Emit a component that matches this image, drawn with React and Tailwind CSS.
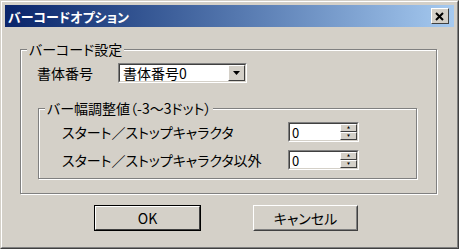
import { useState } from 'react'

const FONT = "font-['MS_UI_Gothic','Noto_Sans_CJK_JP',sans-serif] [font-feature-settings:'palt']"

function GroupBox({ label, className, children }) {
  return (
    <div className={`relative border border-[#808080] shadow-[inset_1px_1px_0_#fff,1px_1px_0_#fff] ${className}`}>
      <span className="absolute left-[6px] top-[-9px] bg-[#d4d0c8] px-[2px] leading-[16px]">{label}</span>
      {children}
    </div>
  )
}

function Sunken({ className, children }) {
  return (
    <div className={`border border-t-[#808080] border-l-[#808080] border-r-white border-b-white ${className}`}>
      <div className="h-full border border-t-[#404040] border-l-[#404040] border-r-[#d4d0c8] border-b-[#d4d0c8] bg-white flex items-center">
        {children}
      </div>
    </div>
  )
}

function SpinBox({ value }) {
  return (
    <Sunken className="w-[71px] h-[20px]">
      <span className="flex-1 pl-[2px] text-[13px] leading-none">{value}</span>
      <div className="flex flex-col h-full w-[17px]">
        {['▲', '▼'].map(a => (
          <div key={a} className="flex-1 bg-[#d4d0c8] border border-t-white border-l-white border-r-[#404040] border-b-[#404040] flex items-center justify-center text-[3px] leading-none text-black">
            {a}
          </div>
        ))}
      </div>
    </Sunken>
  )
}

export default function App() {
  const [font] = useState('書体番号0')

  return (
    <div className={`w-[459px] h-[249px] bg-[#d4d0c8] border border-t-[#d4d0c8] border-l-[#d4d0c8] border-r-[#404040] border-b-[#404040] text-black ${FONT}`}>
      <div className="h-full border border-t-white border-l-white border-r-[#808080] border-b-[#808080] p-[3px] flex flex-col">
        {/* title bar */}
        <div className="h-[22px] bg-linear-to-r from-[#0a246a] to-[#a6caf0] flex items-center justify-between pl-[3px] pr-[5px]">
          <span className="text-white font-bold text-[13px] leading-none">バーコードオプション</span>
          <button className="w-[18px] h-[16px] bg-[#d4d0c8] border border-t-white border-l-white border-r-[#404040] border-b-[#404040] flex items-center justify-center">
            <svg width="10" height="9" viewBox="0 0 10 9">
              <path d="M1 1 L8 8 M8 1 L1 8" stroke="#000" strokeWidth="2" />
            </svg>
          </button>
        </div>

        <div className="text-[14px] pl-[15px] pr-[17px] pt-[22px]">
          <GroupBox label="バーコード設定" className="h-[145px] pt-[13px]">
            <div className="flex items-center pl-[16px]">
              <span className="w-[81px] leading-none">書体番号</span>
              <Sunken className="w-[129px] h-[20px]">
                <span className="flex-1 pl-[3px] leading-none">{font}</span>
                <div className="h-full w-[17px] bg-[#d4d0c8] border border-t-white border-l-white border-r-[#404040] border-b-[#404040] flex items-center justify-center">
                  <svg width="7" height="4" viewBox="0 0 7 4"><path d="M0 0 H7 L3.5 4 Z" fill="#000" /></svg>
                </div>
              </Sunken>
            </div>

            <GroupBox label="バー幅調整値（-3～3ドット）" className="ml-[17px] mr-[19px] mt-[25px] h-[71px] pt-[13px]">
              <div className="grid grid-cols-[226px_71px] gap-y-[8px] pl-[23px] items-center">
                <span className="leading-none">スタート／ストップキャラクタ</span>
                <SpinBox value="0" />
                <span className="leading-none">スタート／ストップキャラクタ以外</span>
                <SpinBox value="0" />
              </div>
            </GroupBox>
          </GroupBox>

          <div className="flex mt-[11px]">
            <button className="ml-[74px] w-[107px] h-[26px] border border-black">
              <div className="h-full border border-t-white border-l-white border-r-[#404040] border-b-[#404040] flex items-center justify-center leading-none">
                OK
              </div>
            </button>
            <button className="ml-[52px] w-[105px] h-[26px] border border-t-white border-l-white border-r-[#404040] border-b-[#404040]">
              <div className="h-full border border-t-[#d4d0c8] border-l-[#d4d0c8] border-r-[#808080] border-b-[#808080] flex items-center justify-center leading-none">
                キャンセル
              </div>
            </button>
          </div>
        </div>
      </div>
    </div>
  )
}
